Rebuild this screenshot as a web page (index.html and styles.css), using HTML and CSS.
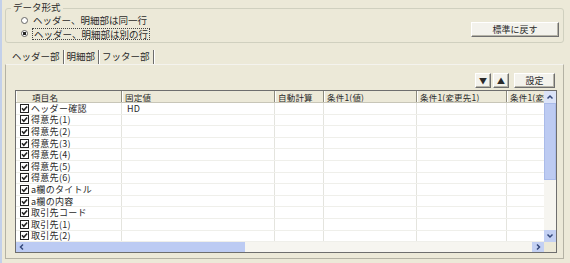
FILE: index.html
```html
<!DOCTYPE html>
<html lang="ja">
<head>
  <meta charset="UTF-8">
  <title>データ形式</title>
  <link rel="stylesheet" href="styles.css">
</head>
<body>
  <svg class="defs" width="0" height="0">
    <symbol id="chk" viewBox="0 0 9 9">
      <rect x="0.5" y="0.5" width="8" height="8" fill="#fff" stroke="#222"/>
      <path d="M2 4.3 L3.8 6.2 L7.1 2.5" fill="none" stroke="#222" stroke-width="1.6"/>
    </symbol>
  </svg>

  <div class="window">
    <div class="group">
      <span class="group-title">データ形式</span>
      <div class="radios">
        <label class="radio"><span class="dot"></span>ヘッダー、明細部は同一行</label>
        <label class="radio checked"><span class="dot"></span><span class="focus">ヘッダー、明細部は別の行</span></label>
      </div>
      <button class="btn reset">標準に戻す</button>
    </div>

    <div class="tabs">
      <span class="tab active">ヘッダー部</span>
      <span class="tab">明細部</span>
      <span class="tab">フッター部</span>
    </div>

    <div class="panel">
      <div class="toolbar">
        <button class="btn arrow">▼</button>
        <button class="btn arrow">▲</button>
        <button class="btn set">設定</button>
      </div>

      <div class="grid">
        <div class="grid-main">
          <div class="table">
            <div class="row head">
              <div class="c c1 first">項目名</div>
              <div class="c c2">固定値</div>
              <div class="c c3">自動計算</div>
              <div class="c c4">条件1(値)</div>
              <div class="c c5">条件1(変更先1)</div>
              <div class="c c6">条件1(変更先2)</div>
            </div>
            <div class="row"><div class="c c1"><svg class="chk"><use href="#chk"/></svg>ヘッダー確認</div><div class="c c2">HD</div><div class="c c3"></div><div class="c c4"></div><div class="c c5"></div><div class="c c6"></div></div>
            <div class="row"><div class="c c1"><svg class="chk"><use href="#chk"/></svg>得意先(1)</div><div class="c c2"></div><div class="c c3"></div><div class="c c4"></div><div class="c c5"></div><div class="c c6"></div></div>
            <div class="row"><div class="c c1"><svg class="chk"><use href="#chk"/></svg>得意先(2)</div><div class="c c2"></div><div class="c c3"></div><div class="c c4"></div><div class="c c5"></div><div class="c c6"></div></div>
            <div class="row"><div class="c c1"><svg class="chk"><use href="#chk"/></svg>得意先(3)</div><div class="c c2"></div><div class="c c3"></div><div class="c c4"></div><div class="c c5"></div><div class="c c6"></div></div>
            <div class="row"><div class="c c1"><svg class="chk"><use href="#chk"/></svg>得意先(4)</div><div class="c c2"></div><div class="c c3"></div><div class="c c4"></div><div class="c c5"></div><div class="c c6"></div></div>
            <div class="row"><div class="c c1"><svg class="chk"><use href="#chk"/></svg>得意先(5)</div><div class="c c2"></div><div class="c c3"></div><div class="c c4"></div><div class="c c5"></div><div class="c c6"></div></div>
            <div class="row"><div class="c c1"><svg class="chk"><use href="#chk"/></svg>得意先(6)</div><div class="c c2"></div><div class="c c3"></div><div class="c c4"></div><div class="c c5"></div><div class="c c6"></div></div>
            <div class="row"><div class="c c1"><svg class="chk"><use href="#chk"/></svg>a欄のタイトル</div><div class="c c2"></div><div class="c c3"></div><div class="c c4"></div><div class="c c5"></div><div class="c c6"></div></div>
            <div class="row"><div class="c c1"><svg class="chk"><use href="#chk"/></svg>a欄の内容</div><div class="c c2"></div><div class="c c3"></div><div class="c c4"></div><div class="c c5"></div><div class="c c6"></div></div>
            <div class="row"><div class="c c1"><svg class="chk"><use href="#chk"/></svg>取引先コード</div><div class="c c2"></div><div class="c c3"></div><div class="c c4"></div><div class="c c5"></div><div class="c c6"></div></div>
            <div class="row"><div class="c c1"><svg class="chk"><use href="#chk"/></svg>取引先(1)</div><div class="c c2"></div><div class="c c3"></div><div class="c c4"></div><div class="c c5"></div><div class="c c6"></div></div>
            <div class="row"><div class="c c1"><svg class="chk"><use href="#chk"/></svg>取引先(2)</div><div class="c c2"></div><div class="c c3"></div><div class="c c4"></div><div class="c c5"></div><div class="c c6"></div></div>
          </div>

          <div class="vscroll">
            <div class="sb-btn"><svg viewBox="0 0 12 12"><polyline points="3.5,7.5 6,5 8.5,7.5"/></svg></div>
            <div class="v-thumb"></div>
            <div class="track"></div>
            <div class="sb-btn dark"><svg viewBox="0 0 12 12"><polyline points="3.5,4.5 6,7 8.5,4.5"/></svg></div>
          </div>
        </div>

        <div class="hscroll">
          <div class="sb-btn h"><svg viewBox="0 0 12 10"><polyline points="7,2.5 4.5,5 7,7.5"/></svg></div>
          <div class="h-thumb"></div>
          <div class="track"></div>
          <div class="sb-btn h dark"><svg viewBox="0 0 12 10"><polyline points="5,2.5 7.5,5 5,7.5"/></svg></div>
          <div class="corner"></div>
        </div>
      </div>
    </div>
  </div>
</body>
</html>
```

FILE: styles.css
```css
* {
  box-sizing: border-box;
}

body {
  margin: 0;
  height: 263px;
  overflow: hidden;
  background: #ece9d8;
  font-family: "Noto Sans CJK JP", "Noto Sans", sans-serif;
  font-size: 9.5px;
  color: #2a2a2a;
}

.defs {
  position: absolute;
}

.window {
  height: 263px;
  border-left: 2px solid #c3d0ea;
  padding: 8px 6px 0 3px;
}

/* data format group */
.group {
  position: relative;
  display: flex;
  justify-content: space-between;
  align-items: flex-start;
  border: 1px solid #d0d0bf;
  border-radius: 3px;
  padding: 5px 4px 2px 15px;
}

.group-title {
  position: absolute;
  left: 5px;
  top: -7px;
  padding: 0 2px;
  line-height: 10px;
  background: #ece9d8;
}

.radios {
  display: flex;
  flex-direction: column;
}

.radio {
  display: flex;
  align-items: center;
  height: 13px;
  line-height: 11px;
}

.dot {
  width: 7px;
  height: 7px;
  margin-right: 5px;
  border: 1px solid #666;
  border-radius: 50%;
  background: #fff;
}

.checked .dot {
  background: radial-gradient(circle, #222 1.4px, #fff 2px);
}

.focus {
  display: flex;
  align-items: center;
  margin-left: -1px;
  padding: 0 1px;
  height: 12px;
  line-height: 10px;
  border: 1px dotted #444;
}

.btn {
  height: 15px;
  padding: 0;
  font: inherit;
  font-size: 9px;
  line-height: 12px;
  color: #2a2a2a;
  background: #f3f2ec;
  border: 1px solid;
  border-color: #fff #6f6f6f #6f6f6f #fff;
  box-shadow: inset -1px -1px #b6b4a8;
}

.reset {
  width: 88px;
  margin-top: 8px;
}

/* tabs */
.tabs {
  display: flex;
  height: 16px;
  margin-top: 5px;
  padding-left: 4px;
}

.tab {
  height: 14px;
  margin-top: 2px;
  padding: 0 3px;
  line-height: 13px;
  border-right: 1px solid #6d6d6d;
  box-shadow: 1px 0 #fff;
}

.panel {
  height: 195px;
  border: 1px solid #b4b2a4;
  border-top-color: #f4f3ee;
  padding: 8px 6px 5px 9px;
}

.toolbar {
  display: flex;
  justify-content: flex-end;
  gap: 2px;
  height: 15px;
  padding-right: 2px;
}

.arrow {
  width: 16px;
  font-size: 8px;
}

.set {
  width: 41px;
  margin-left: 3px;
}

/* list grid */
.grid {
  display: flex;
  flex-direction: column;
  height: 163px;
  margin-top: 2px;
  border: 1px solid #6e6e6e;
  background: #fff;
}

.grid-main {
  display: flex;
  height: 151px;
}

.table {
  flex: 1;
  min-width: 0;
  overflow: hidden;
}

.row {
  display: flex;
  height: 11.6px;
  border-bottom: 1px solid #efefea;
  font-size: 9px;
  letter-spacing: 0.3px;
}

.c {
  display: flex;
  align-items: center;
  padding-left: 4px;
  overflow: hidden;
  white-space: nowrap;
  border-right: 1px solid #e4e4de;
}

.c1 { width: 106px; flex: none; }
.c2 { width: 153px; flex: none; padding-left: 5px; }
.c3 { width: 49px; flex: none; }
.c4 { width: 93px; flex: none; }
.c5 { width: 90px; flex: none; }
.c6 { flex: 1; min-width: 0; border-right: none; }

.row.head {
  height: 12px;
  background: #ece9d8;
  border-bottom: 1px solid #c8c6b8;
  font-size: 8.5px;
  letter-spacing: 0.2px;
}

.head .c {
  padding-left: 3px;
  border-right: 1px solid #8d8b7e;
  box-shadow: inset 1px 0 #fff;
}

.head .c6 {
  border-right: none;
}

.head .first {
  padding-left: 16px;
}

.chk {
  width: 9px;
  height: 9px;
  margin-right: 2px;
  flex: none;
}

/* scrollbars */
.vscroll {
  display: flex;
  flex-direction: column;
  width: 12px;
  background: #f6f5f0;
}

.sb-btn {
  height: 12px;
  flex: none;
  background: #dbe3f8;
}

.sb-btn.dark {
  background: #c3d0f3;
}

.sb-btn svg {
  display: block;
  width: 12px;
  height: 12px;
}

.sb-btn polyline {
  fill: none;
  stroke: #34487a;
  stroke-width: 1.5;
}

.v-thumb {
  height: 77px;
  flex: none;
  background: #bdcbf2;
  border: 1px solid #aabbe9;
}

.track {
  flex: 1;
  background: #f6f5f0;
}

.hscroll {
  display: flex;
  height: 10px;
}

.sb-btn.h {
  width: 12px;
  height: 10px;
  background: #bccbf3;
}

.sb-btn.h.dark {
  background: #c3d0f3;
}

.sb-btn.h svg {
  height: 10px;
}

.h-thumb {
  width: 217px;
  background: #bccbf3;
}

.corner {
  width: 12px;
  background: #ece9d8;
}
```
